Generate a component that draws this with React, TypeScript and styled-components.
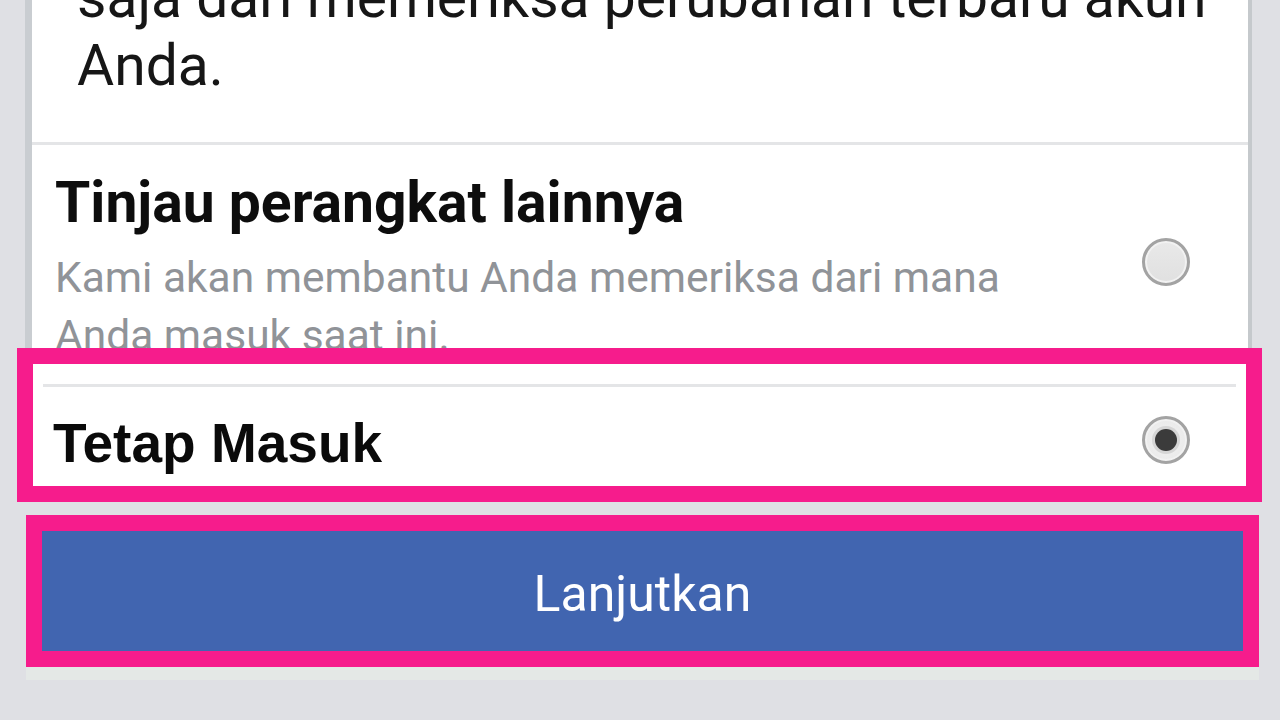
import React, { useState } from 'react';
import styled, { createGlobalStyle } from 'styled-components';

const GlobalStyle = createGlobalStyle`
  html, body {
    margin: 0;
    padding: 0;
    background: #dfe0e4;
    font-family: Roboto, 'Liberation Sans', Arial, sans-serif;
  }
`;

const Page = styled.div`
  display: flex;
  flex-direction: column;
  width: 1280px;
  height: 720px;
  overflow: hidden;
  background: #dfe0e4;
`;

const Card = styled.div`
  margin-left: 25px;
  width: 1227px;
  box-sizing: border-box;
  background: #ffffff;
  border-left: 7px solid #c9cdd1;
  border-right: 4px solid #c5c9cc;
`;

const Intro = styled.div`
  padding: 0 30px 42.5px 45px;
`;

const IntroText = styled.p`
  margin: -36.5px 0 0;
  font-size: 57px;
  line-height: 68px;
  color: #161616;
`;

const Divider = styled.div<{ inset?: number }>`
  height: 3px;
  margin: 0 ${(p) => p.inset ?? 0}px;
  background: #e4e5e7;
`;

const OptionSection = styled.div`
  display: flex;
  align-items: flex-start;
  gap: 80px;
  height: 203px;
  box-sizing: border-box;
  padding: 25px 58px 0 23px;
  overflow: hidden;
`;

const OptionText = styled.div`
  flex: 1;
`;

const OptionTitle = styled.div`
  font-size: 57px;
  font-weight: 700;
  line-height: 66px;
  color: #0d0d0d;
`;

const OptionHint = styled.div`
  margin-top: 12.5px;
  font-size: 42.5px;
  line-height: 58px;
  color: #909398;
`;

const Radio = styled.button<{ checked: boolean; offset?: number }>`
  position: relative;
  flex: none;
  width: 48px;
  height: 48px;
  margin-top: ${(p) => p.offset ?? 0}px;
  padding: 0;
  border-radius: 50%;
  border: 3px solid #a3a3a3;
  background: ${(p) =>
    p.checked
      ? 'radial-gradient(circle, #f4f4f4 0%, #e6e6e6 100%)'
      : 'linear-gradient(180deg, #e9e9e9 0%, #e0e0e0 100%)'};
  box-shadow: inset 0 0 0 2px #f2f2f2;
  cursor: pointer;

  &::after {
    content: '';
    display: ${(p) => (p.checked ? 'block' : 'none')};
    position: absolute;
    top: 50%;
    left: 50%;
    width: 22px;
    height: 22px;
    margin: -11px 0 0 -11px;
    border-radius: 50%;
    background: #3b3b3b;
    box-shadow: 0 0 0 3px #d6d6d6;
  }
`;

const Highlight = styled.div<{ left: number; width: number; height: number }>`
  margin-left: ${(p) => p.left}px;
  width: ${(p) => p.width}px;
  height: ${(p) => p.height}px;
  box-sizing: border-box;
  border: 16px solid #f61c8c;
`;

const SelectedPanel = styled(Highlight)`
  background: #ffffff;
`;

const SelectedRow = styled.div`
  display: flex;
  align-items: flex-start;
  justify-content: space-between;
  height: 99px;
  box-sizing: border-box;
  padding: 29px 56px 0 20px;
`;

const SelectedLabel = styled.div`
  font-family: 'Liberation Sans', Arial, sans-serif;
  font-size: 55px;
  font-weight: 700;
  line-height: 55px;
  color: #0a0a0a;
`;

const ButtonFrame = styled(Highlight)`
  margin-top: 13px;
  box-shadow: 0 13px 0 #e4e8e6;
`;

const ContinueButton = styled.button`
  display: flex;
  align-items: center;
  justify-content: center;
  width: 100%;
  height: 100%;
  padding: 6px 0 0;
  border: none;
  background: #4165b0;
  color: #ffffff;
  font-family: Roboto, sans-serif;
  font-size: 50px;
  cursor: pointer;
`;

const App: React.FC = () => {
  const [choice, setChoice] = useState<'review' | 'stay'>('stay');

  return (
    <Page>
      <GlobalStyle />
      <Card>
        <Intro>
          <IntroText>
            saja dari memeriksa perubahan terbaru akun
            <br />
            Anda.
          </IntroText>
        </Intro>
        <Divider />
        <OptionSection>
          <OptionText>
            <OptionTitle>Tinjau perangkat lainnya</OptionTitle>
            <OptionHint>
              Kami akan membantu Anda memeriksa dari mana Anda masuk saat ini.
            </OptionHint>
          </OptionText>
          <Radio
            checked={choice === 'review'}
            offset={68}
            onClick={() => setChoice('review')}
          />
        </OptionSection>
      </Card>
      <SelectedPanel left={17} width={1245} height={154}>
        <Divider inset={10} style={{ marginTop: 20 }} />
        <SelectedRow>
          <SelectedLabel>Tetap Masuk</SelectedLabel>
          <Radio checked={choice === 'stay'} onClick={() => setChoice('stay')} />
        </SelectedRow>
      </SelectedPanel>
      <ButtonFrame left={26} width={1233} height={152}>
        <ContinueButton>Lanjutkan</ContinueButton>
      </ButtonFrame>
    </Page>
  );
};

export default App;
